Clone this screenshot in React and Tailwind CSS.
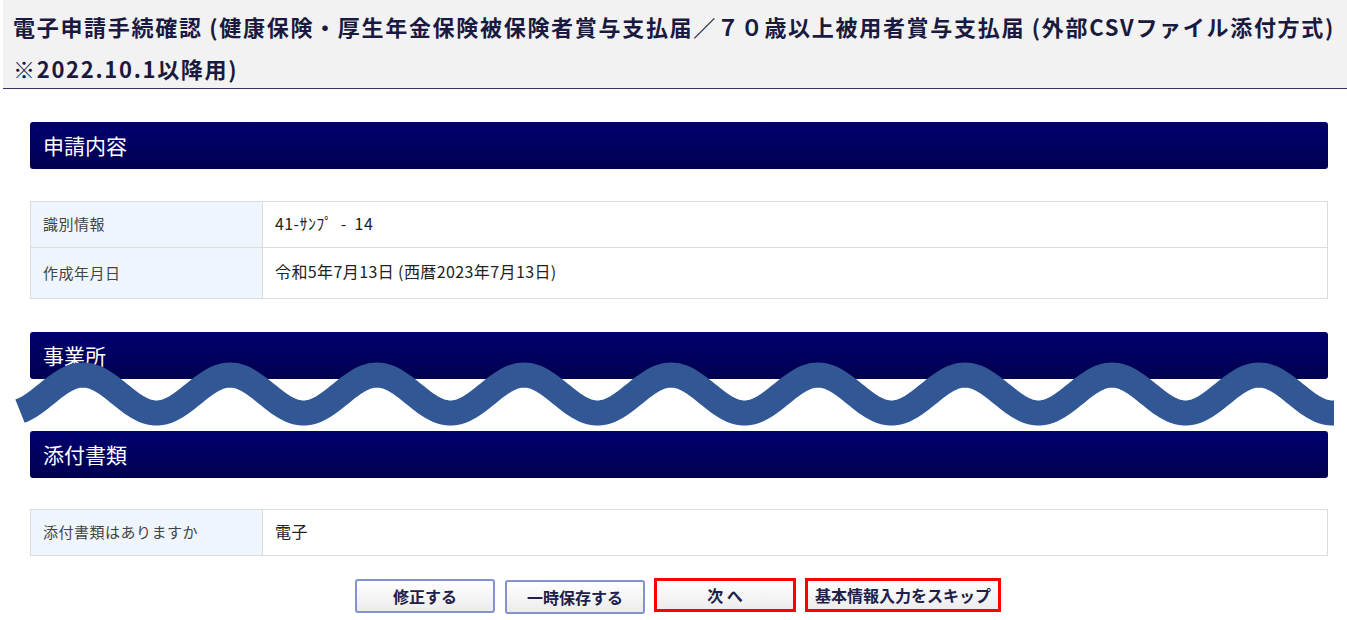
import React from "react";

function Wave() {
  const pts = [];
  const period = 147, phase = 83, cy = 394, amp = 19;
  for (let x = 20; x <= 1335; x += 3) {
    const y = cy - amp * Math.cos((2 * Math.PI * (x - phase)) / period);
    pts.push(`${x},${y.toFixed(1)}`);
  }
  return (
    <svg className="absolute left-0 top-0 pointer-events-none" width="1347" height="620">
      <polyline points={pts.join(" ")} fill="none" stroke="#315895" strokeWidth="25" />
    </svg>
  );
}

function SectionHead({ title }) {
  return (
    <div className="h-[47px] rounded-[3px] bg-gradient-to-b from-[#000070] to-[#000050] flex items-center pl-[13px] text-white text-[21px]">
      {title}
    </div>
  );
}

function Row({ label, value, h, last }) {
  return (
    <div className={`flex ${last ? "" : "border-b border-[#dcdcdc]"}`} style={{ height: h }}>
      <div className="w-[232px] bg-[#eef5fc] border-r border-[#dcdcdc] flex items-center pl-[12px] text-[15px] tracking-[0.5px] text-[#444]">{label}</div>
      <div className="flex-1 flex items-center pl-[12px] text-[16px] tracking-[0.4px] text-[#222] pb-[4px] whitespace-pre">{value}</div>
    </div>
  );
}

function Btn({ children, red, w }) {
  return (
    <div className={`${red ? "border-[3px] border-[#ff0000]" : "border-2 border-[#8492cf] rounded-[3px]"} h-[34px] bg-gradient-to-b from-white to-[#ececec] flex items-center justify-center text-[16px] font-bold text-[#20204a]`} style={{ width: w }}>
      {children}
    </div>
  );
}

export default function App() {
  return (
    <div className="relative w-[1347px] h-[620px] bg-white overflow-hidden" style={{ fontFamily: '"Noto Sans CJK JP", "Noto Sans", sans-serif' }}>
      <div className="ml-[3px] h-[89px] bg-[#f2f2f2] border-b border-[#333366] pl-[10px] pt-[5px] text-[22px] tracking-[1.7px] font-bold text-[#1a1a40] leading-[42px] whitespace-nowrap">
        <div>電子申請手続確認 (健康保険・厚生年金保険被保険者賞与支払届／７０歳以上被用者賞与支払届 (外部CSVファイル添付方式)</div>
        <div>※2022.10.1以降用)</div>
      </div>
      <div className="mx-[30px] mr-[19px] mt-[33px]">
        <SectionHead title="申請内容" />
        <div className="mt-[32px] border border-[#dcdcdc]">
          <Row label="識別情報" value="41-ｻﾝﾌﾟ  -  14" h={46} />
          <Row label="作成年月日" value="令和5年7月13日 (西暦2023年7月13日)" h={50} last />
        </div>
        <div className="mt-[33px]"><SectionHead title="事業所" /></div>
        <div className="mt-[52px]"><SectionHead title="添付書類" /></div>
        <div className="mt-[31px] border border-[#dcdcdc]">
          <Row label="添付書類はありますか" value="電子" h={45} last />
        </div>
        <div className="mt-[22px] flex justify-center gap-[9px] pr-[2px]">
          <div className="mt-[1px]"><Btn w={140}>修正する</Btn></div>
          <div className="mt-[2px] ml-[1px]"><Btn w={140}>一時保存する</Btn></div>
          <Btn red w={142}>次 へ</Btn>
          <Btn red w={196}>基本情報入力をスキップ</Btn>
        </div>
      </div>
      <Wave />
    </div>
  );
}
